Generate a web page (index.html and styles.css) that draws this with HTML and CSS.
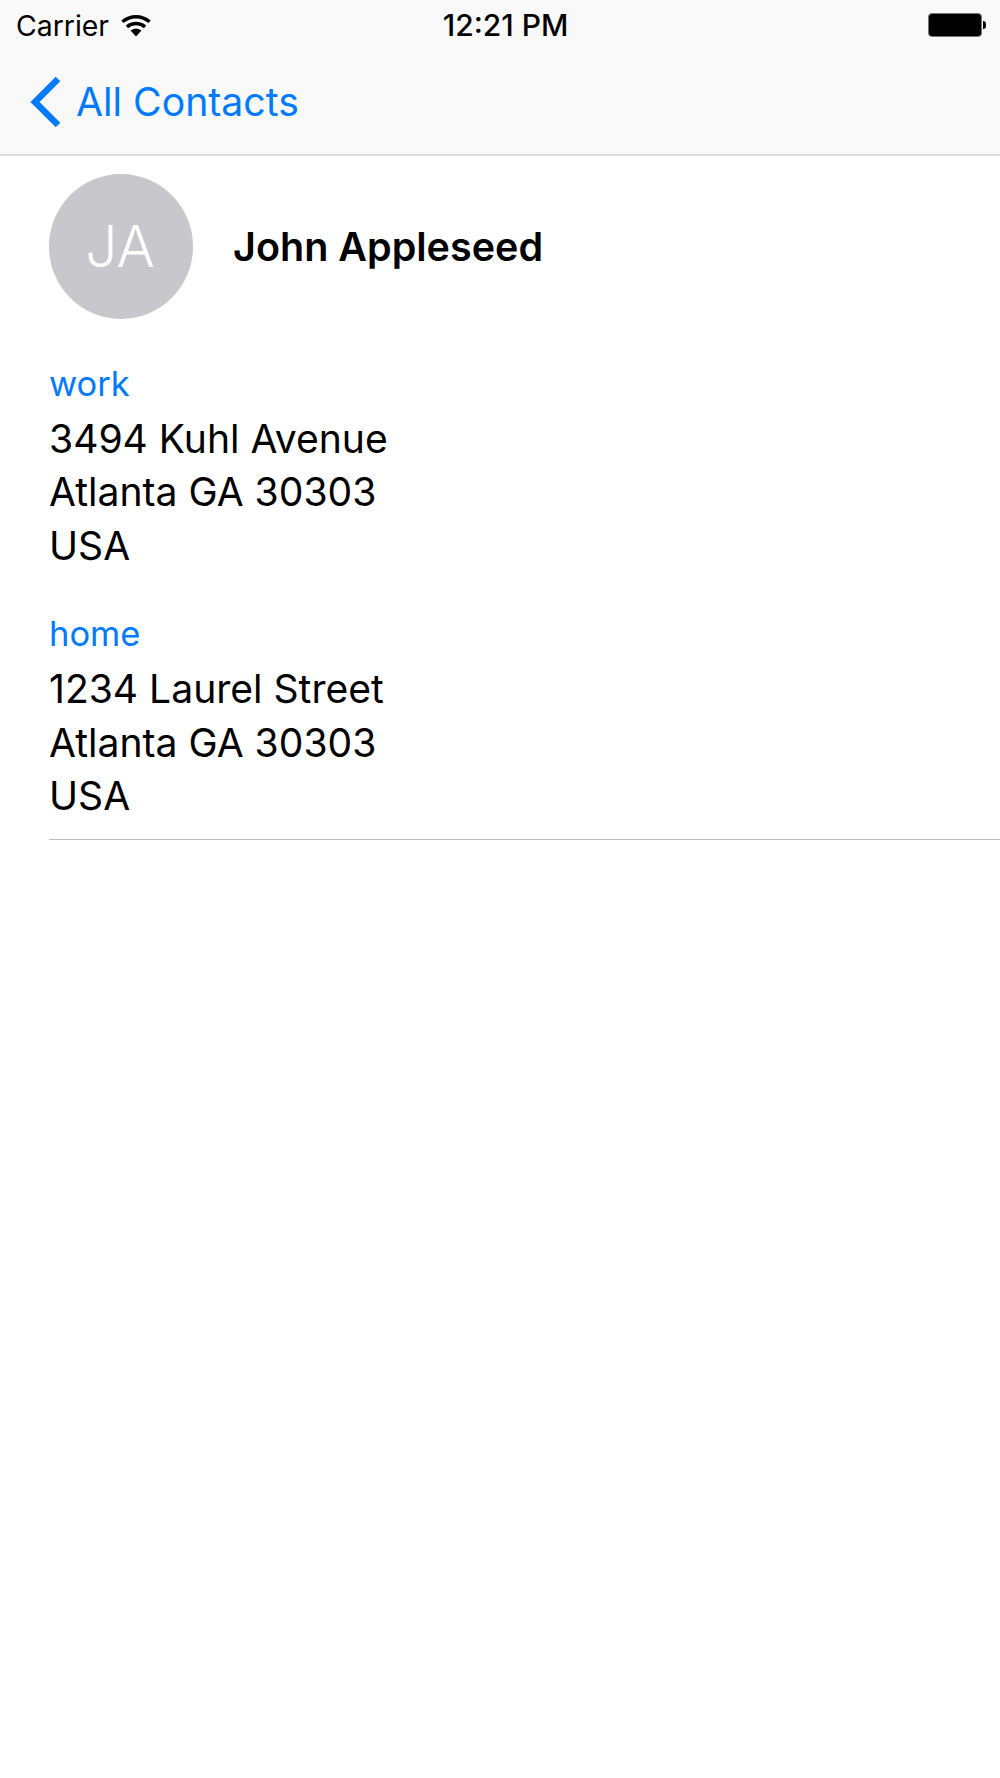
FILE: index.html
```html
<!DOCTYPE html>
<html lang="en">

<head>
    <meta charset="UTF-8">
    <meta name="viewport" content="width=device-width, initial-scale=1.0">
    <title>John Appleseed</title>
    <link rel="stylesheet" href="styles.css">
</head>

<body>
    <header class="top-bar">
        <div class="status-bar">
            <div class="status-left">
                <span class="carrier">Carrier</span>
                <svg class="wifi" width="30" height="22" viewBox="0 0 30 22">
                    <path d="M15 21.500l-5.200-5.600c3-2.300 7.400-2.300 10.400 0z" fill="#000"/>
                    <path d="M6.300 12.300c5-4.300 12.400-4.300 17.400 0M2 7.500C9.500 1 20.500 1 28 7.500" fill="none" stroke="#000" stroke-width="3.200"/>
                </svg>
            </div>
            <span class="clock">12:21 PM</span>
            <div class="battery">
                <div class="battery-body"></div>
                <div class="battery-tip"></div>
            </div>
        </div>
        <nav class="nav-bar">
            <a class="back-link" href="#">
                <svg class="chevron" width="32" height="52" viewBox="0 0 32 52">
                    <path d="M29 3L6 26 29 49" fill="none" stroke="#007aff" stroke-width="6.500"/>
                </svg>
                <span class="back-text">All Contacts</span>
            </a>
        </nav>
    </header>

    <main class="contact">
        <div class="contact-head">
            <div class="avatar">JA</div>
            <h1 class="contact-name">John Appleseed</h1>
        </div>

        <section class="address">
            <div class="address-label">work</div>
            <div class="address-line">3494 Kuhl Avenue</div>
            <div class="address-line">Atlanta GA 30303</div>
            <div class="address-line">USA</div>
        </section>

        <section class="address">
            <div class="address-label">home</div>
            <div class="address-line">1234 Laurel Street</div>
            <div class="address-line">Atlanta GA 30303</div>
            <div class="address-line">USA</div>
        </section>

        <hr class="divider">
    </main>
</body>

</html>
```

FILE: styles.css
```css
body {
    margin: 0;
    background-color: white;
    color: black;
    font-family: Inter, "Liberation Sans", sans-serif;
}

.top-bar {
    height: 154px;
    background-color: #f9f9f9;
    border-bottom: 2px solid #dcdcdc;
}

.status-bar {
    height: 50px;
    padding: 0 14px 0 16px;
    display: grid;
    grid-template-columns: 1fr auto 1fr;
    align-items: center;
}

.status-left {
    display: flex;
    align-items: center;
    gap: 11px;
}

.carrier {
    font-size: 28.400px;
}

.wifi {
    width: 32px;
    height: 23px;
}

.clock {
    margin-left: 9px;
    font-size: 30px;
    font-weight: 500;
}

.battery {
    display: flex;
    align-items: center;
    justify-content: flex-end;
}

.battery-body {
    width: 54px;
    height: 24px;
    box-sizing: border-box;
    background-color: black;
    border: 1px solid #777;
    border-radius: 4px;
}

.battery-tip {
    width: 3px;
    height: 8px;
    margin-left: 1px;
    background-color: black;
    border-radius: 0 4px 4px 0;
}

.nav-bar {
    height: 104px;
    padding-left: 29px;
    display: flex;
    align-items: center;
}

.back-link {
    display: flex;
    align-items: center;
    gap: 15px;
    color: #007aff;
    font-size: 39.200px;
    text-decoration: none;
}

.back-text {
    margin-bottom: 2px;
}

.contact {
    padding: 18px 0 0 49px;
}

.contact-head {
    display: flex;
    align-items: center;
    gap: 40px;
}

.avatar {
    width: 144px;
    height: 145px;
    padding-right: 2px;
    box-sizing: border-box;
    border-radius: 50%;
    background-color: #c7c7cc;
    color: white;
    font-size: 57px;
    font-weight: 300;
    display: flex;
    align-items: center;
    justify-content: center;
}

.contact-name {
    margin: 0;
    font-size: 39.500px;
    font-weight: 600;
}

.address {
    margin-top: 37px;
}

.address + .address {
    margin-top: 34.500px;
}

.address-label {
    color: #007aff;
    font-size: 34.500px;
    line-height: 56px;
}

.address-line {
    font-size: 39.100px;
    line-height: 53.300px;
}

.divider {
    margin: 17px 0 0;
    border: none;
    border-top: 1px solid #bdbdbd;
}
```
